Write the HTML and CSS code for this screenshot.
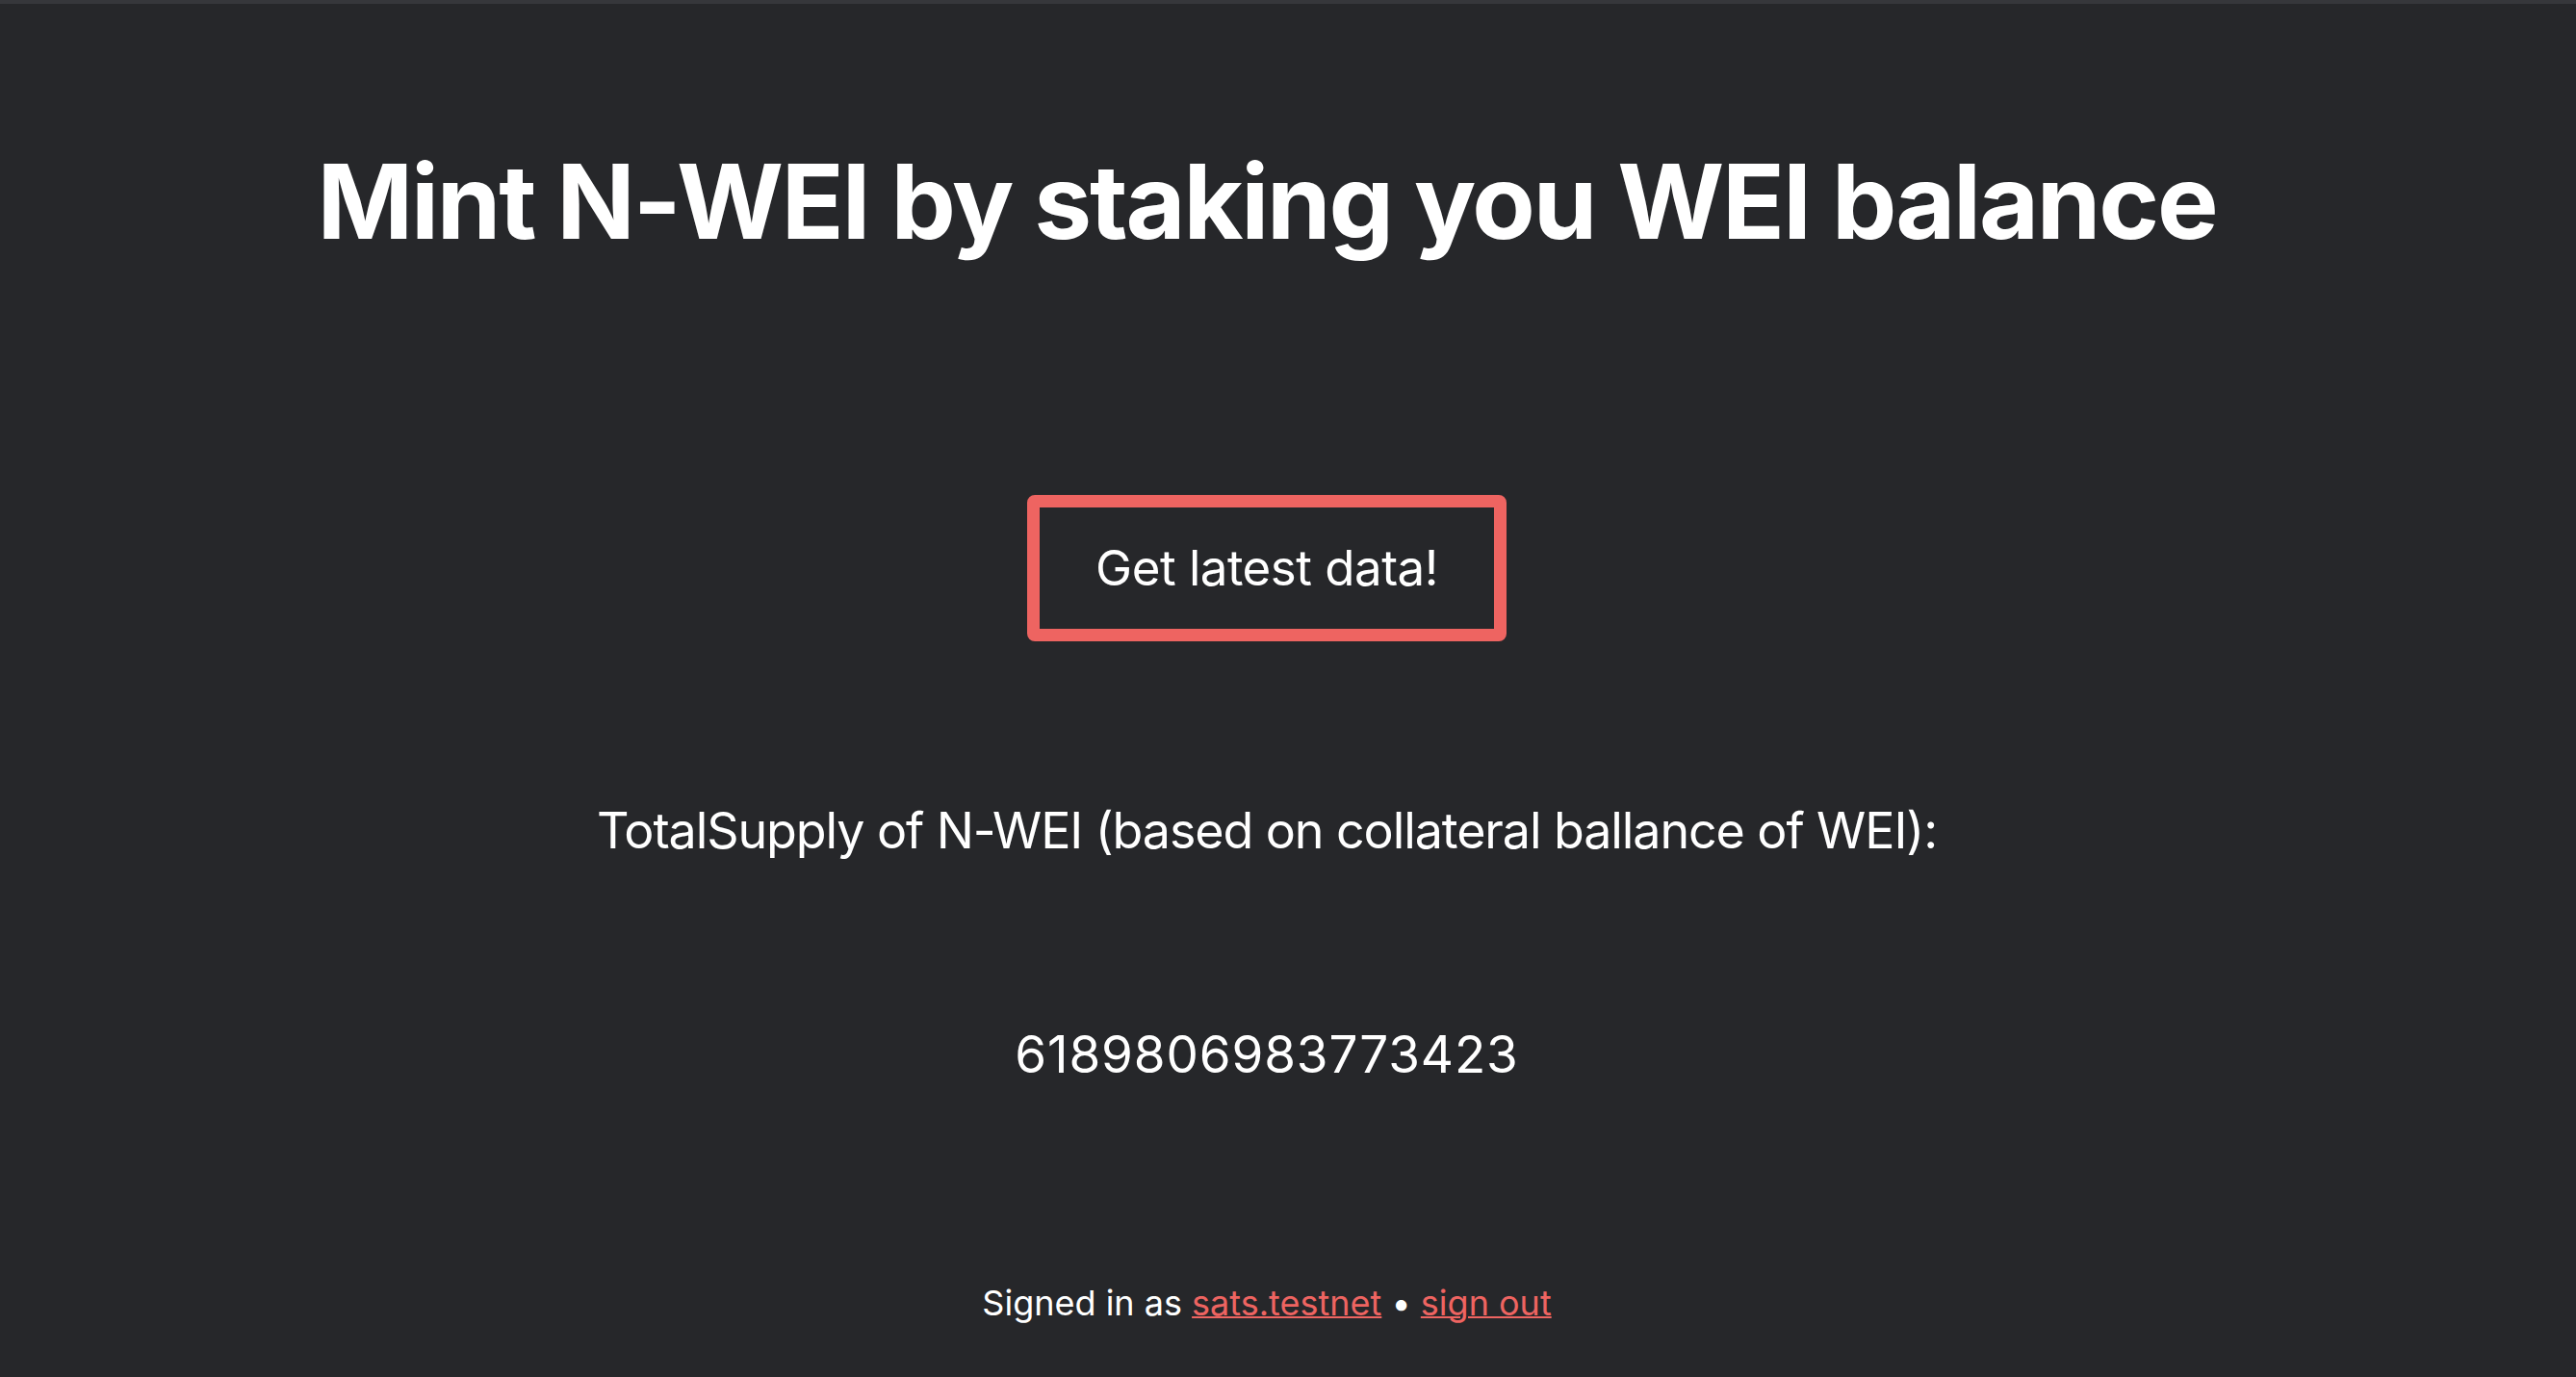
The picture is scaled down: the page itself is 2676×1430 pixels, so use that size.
FILE: index.html
```html
<!DOCTYPE html>
<html lang="en">
<head>
<meta charset="utf-8">
<title>Mint N-WEI</title>
<link rel="stylesheet" href="styles.css">
</head>
<body>
<main class="page">
  <h1 class="title">Mint N-WEI by staking you WEI balance</h1>
  <button class="fetch-btn" type="button">Get latest data!</button>
  <p class="supply-label">TotalSupply of N-WEI (based on collateral ballance of WEI):</p>
  <p class="supply-value">6189806983773423</p>
  <footer class="signin">Signed in as <a class="link" href="#">sats.testnet</a> &bull; <a class="link" href="#">sign out</a></footer>
</main>
</body>
</html>
```

FILE: styles.css
```css
html, body {
  margin: 0;
  padding: 0;
}

body {
  background: #26272a;
  border-top: 4px solid #36373b;
  color: #ffffff;
  font-family: Inter, "Noto Sans", "Liberation Sans", sans-serif;
  min-height: 1426px;
  box-sizing: border-box;
}

.page {
  width: calc(100% - 44px);
  display: flex;
  flex-direction: column;
  align-items: center;
  text-align: center;
}

.title {
  margin: 141px 0 0;
  font-size: 107px;
  font-weight: 700;
  line-height: 1.2;
  letter-spacing: -2.2px;
}

.fetch-btn {
  margin-top: 241px;
  font-family: inherit;
  font-size: 51px;
  line-height: 1.2;
  letter-spacing: -0.5px;
  color: #ffffff;
  background: transparent;
  border: 13px solid #ee6461;
  border-radius: 8px;
  padding: 32px 58px;
  cursor: pointer;
}

.supply-label {
  margin: 166px 0 0;
  font-size: 52px;
  line-height: 1.2;
  letter-spacing: -1.1px;
}

.supply-value {
  margin: 170px 0 0;
  font-size: 53px;
  line-height: 1.2;
  letter-spacing: 0.85px;
}

.signin {
  margin-top: 204px;
  font-size: 36px;
  line-height: 1.2;
}

.link {
  color: #ee6461;
  text-decoration: underline;
  text-decoration-thickness: 2px;
}
```
